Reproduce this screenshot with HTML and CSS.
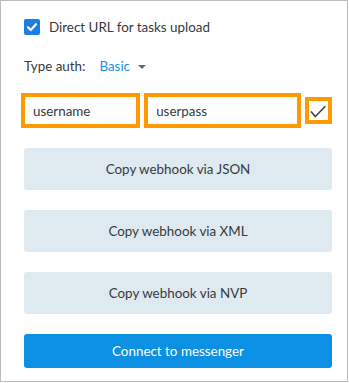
FILE: index.html
```html
<!DOCTYPE html>
<html>
<head>
<meta charset="utf-8">
<link rel="stylesheet" href="styles.css">
</head>
<body>
<div class="panel">
  <label class="row check-row">
    <span class="checkbox">
      <svg width="16" height="16" viewBox="0 0 16 16"><polyline points="4,8.2 6.8,11 12,5.2" fill="none" stroke="#fff" stroke-width="2.2" stroke-linecap="round" stroke-linejoin="round"/></svg>
    </span>
    <span class="label">Direct URL for tasks upload</span>
  </label>
  <div class="row auth-row">
    <span class="label">Type auth:</span>
    <span class="select">Basic</span>
    <span class="caret"></span>
  </div>
  <div class="row inputs">
    <div class="field user">username</div>
    <div class="field pass">userpass</div>
    <div class="confirm">
      <svg width="19" height="19" viewBox="0 0 19 19"><polyline points="2,10.5 6.3,15.5 16.3,5.3" fill="none" stroke="#3d4247" stroke-width="1.6" stroke-linejoin="miter"/></svg>
    </div>
  </div>
  <div class="buttons">
    <button class="btn light">Copy webhook via JSON</button>
    <button class="btn light">Copy webhook via XML</button>
    <button class="btn light">Copy webhook via NVP</button>
    <button class="btn primary">Connect to messenger</button>
  </div>
</div>
</body>
</html>
```
FILE: styles.css
```css
* { box-sizing: border-box; }
html, body { margin: 0; padding: 0; background: #fff; }
body {
  font-family: Lato, "Noto Sans", sans-serif;
  font-size: 13.4px;
  color: #363b40;
}
.panel {
  width: 348px;
  height: 382px;
  border: 1px solid #bcbcbc;
  padding: 18px 15px 0 23px;
}
.row { display: flex; align-items: center; }
.check-row { height: 16px; gap: 9px; }
.checkbox {
  width: 16px; height: 16px;
  border-radius: 2px;
  background: #1b7ee0;
  display: flex;
}
.auth-row { margin-top: 22px; height: 18px; }
.auth-row .label { margin-right: 14px; }
.select { color: #1b8fe3; margin-right: 8px; }
.caret {
  width: 0; height: 0;
  border-left: 4.5px solid transparent;
  border-right: 4.5px solid transparent;
  border-top: 4.5px solid #5f6b76;
  margin-top: 1px;
}
.inputs {
  margin-top: 18px;
  margin-left: -3px;
  height: 35px;
  gap: 4px;
}
.field {
  height: 35px;
  border: 4px solid #ff9900;
  padding-left: 8px;
  display: flex;
  align-items: center;
  color: #363b40;
}
.user { width: 120px; }
.pass { width: 158px; }
.confirm {
  width: 27px; height: 27px;
  border: 4px solid #ff9900;
  display: flex;
}
.buttons {
  margin-top: 20px;
  display: flex;
  flex-direction: column;
  gap: 20px;
}
.btn {
  width: 308px;
  border: none;
  border-radius: 3px;
  font-family: inherit;
  font-size: 13.4px;
  padding: 0;
}
.light {
  height: 42px;
  background: #dfe9f0;
  color: #363b40;
}
.primary {
  height: 34px;
  background: #0b90e4;
  color: #fff;
}
```
